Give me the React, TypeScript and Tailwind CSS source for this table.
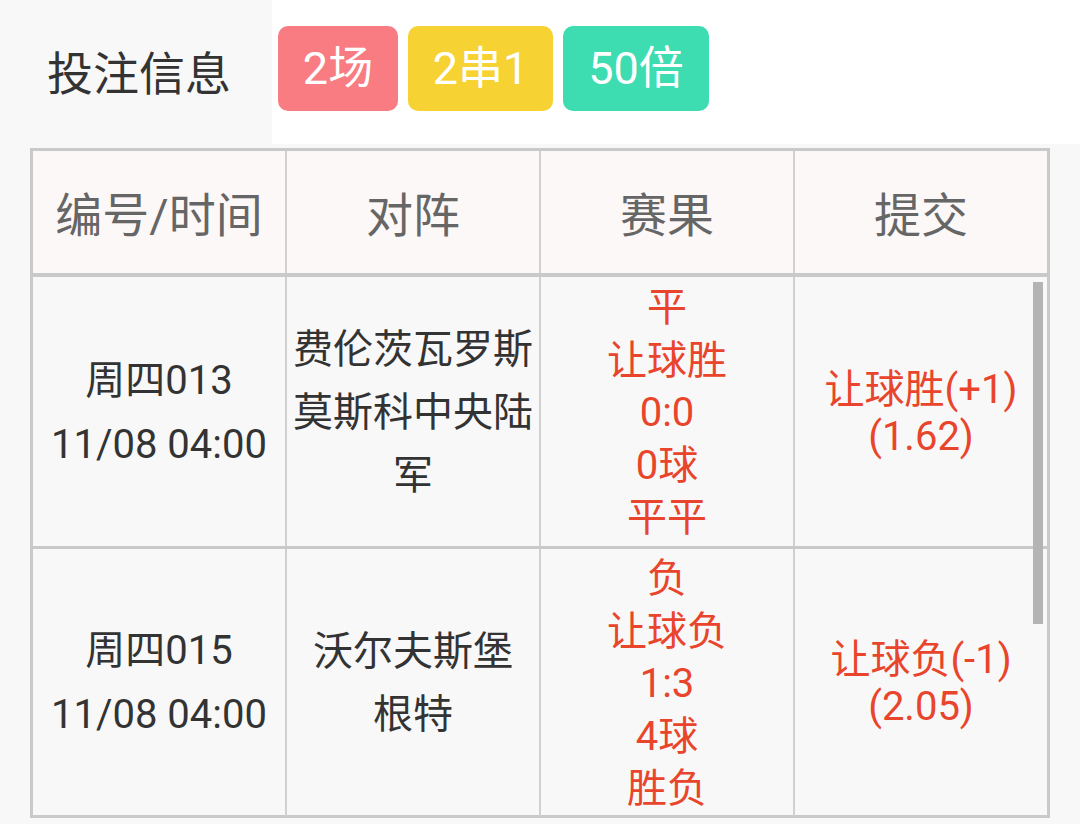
import React from 'react';

interface Bet {
  code: string;
  time: string;
  home: string;
  away: string;
  results: string[];
  pick: string;
  odds: string;
  height: string;
}

const bets: Bet[] = [
  {
    code: '周四013',
    time: '11/08 04:00',
    home: '费伦茨瓦罗斯',
    away: '莫斯科中央陆军',
    results: ['平', '让球胜', '0:0', '0球', '平平'],
    pick: '让球胜(+1)',
    odds: '(1.62)',
    height: 'h-[272px] border-b-[3px]',
  },
  {
    code: '周四015',
    time: '11/08 04:00',
    home: '沃尔夫斯堡',
    away: '根特',
    results: ['负', '让球负', '1:3', '4球', '胜负'],
    pick: '让球负(-1)',
    odds: '(2.05)',
    height: 'h-[266px]',
  },
];

const tags = [
  { label: '2场', cls: 'w-[120px] bg-[#f87c81]' },
  { label: '2串1', cls: 'w-[145px] bg-[#f6d232]' },
  { label: '50倍', cls: 'w-[146px] bg-[#3ddcb1]' },
];

export default function App() {
  return (
    <div
      className="relative w-[1080px] h-[824px] overflow-hidden bg-[#f8f8f8]"
      style={{ fontFamily: 'Roboto, "Noto Sans CJK SC", sans-serif' }}
    >
      {/* header */}
      <div className="flex h-[144px]">
        <div className="w-[272px] pl-[47px] pt-[42px] text-[46px] leading-[64px] text-[#333]">投注信息</div>
        <div className="flex-1 bg-white flex gap-[10px] pl-[6px] pt-[26px]">
          {tags.map((t) => (
            <div
              key={t.label}
              className={`${t.cls} h-[85px] rounded-[10px] text-white text-[45px] flex items-center justify-center`}
            >
              {t.label}
            </div>
          ))}
        </div>
      </div>

      {/* table */}
      <div className="ml-[30px] mt-[4px] w-[1020px] border-[3px] border-[#c9c9c9]">
        <div className="grid grid-cols-[252px_254px_254px_254px] h-[126px] bg-[#fdf8f8] border-b-4 border-[#c9c9c9] text-[47px] text-[#666]">
          <div className="flex items-center justify-center pt-[8px]">编号/时间</div>
          <div className="flex items-center justify-center pt-[8px] border-l-2 border-[#d0d0d0]">对阵</div>
          <div className="flex items-center justify-center pt-[8px] border-l-2 border-[#d0d0d0]">赛果</div>
          <div className="flex items-center justify-center pt-[8px] border-l-2 border-[#d0d0d0]">提交</div>
        </div>

        {bets.map((b) => (
          <div
            key={b.code}
            className={`grid grid-cols-[252px_254px_254px_254px] border-[#c9c9c9] ${b.height}`}
          >
            <div className="flex flex-col items-center justify-center pt-[2px] text-[40px] leading-[64px] text-[#333]">
              <div>{b.code}</div>
              <div>{b.time}</div>
            </div>
            <div className="flex flex-col items-center justify-center pt-[2px] border-l-2 border-[#d0d0d0] px-[6px] text-center text-[40px] leading-[63px] text-[#333]">
              <div>{b.home}</div>
              <div>{b.away}</div>
            </div>
            <div className="flex flex-col items-center justify-center pt-[4px] border-l-2 border-[#d0d0d0] text-[40px] leading-[52.5px] text-[#e8452c]">
              {b.results.map((r, i) => (
                <div key={i}>{r}</div>
              ))}
            </div>
            <div className="flex flex-col items-center justify-center pt-[2px] border-l-2 border-[#d0d0d0] text-[40px] leading-[47px] text-[#e8452c]">
              <div>{b.pick}</div>
              <div>{b.odds}</div>
            </div>
          </div>
        ))}
      </div>

      {/* webview scrollbar */}
      <div className="absolute left-[1033px] top-[282px] w-[10px] h-[342px] bg-[#b4b4b4]" />
    </div>
  );
}
